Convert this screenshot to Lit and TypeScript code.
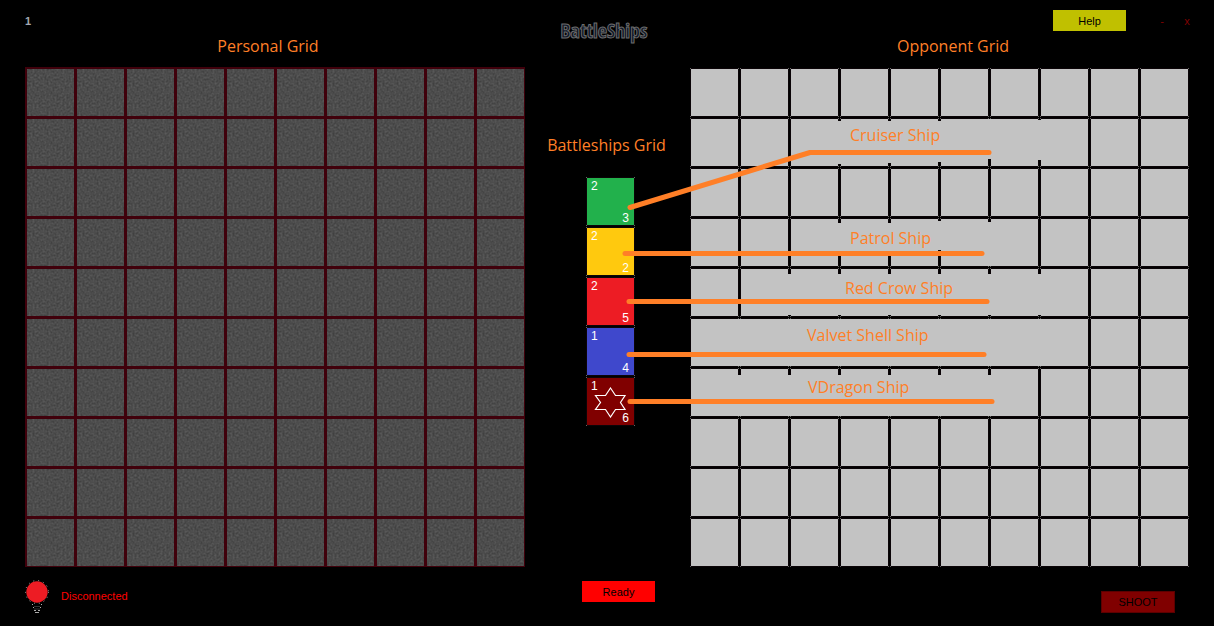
import { LitElement, html, svg, css } from "lit";
import { customElement } from "lit/decorators.js";
import { classMap } from "lit/directives/class-map.js";

const CELLS = Array.from({ length: 100 }, (_, i) => i);

interface Ship {
  name: string;
  kind: string;
  count: number;
  size: number;
  line: string;
  x: number;
  y: number;
}

// Callout coordinates are measured from the opponent board's top left corner.
const SHIPS: Ship[] = [
  { name: "Cruiser Ship", kind: "cruiser", count: 2, size: 3, line: "-60,139.5 120,84.5 299,84.5", x: 160, y: 73 },
  { name: "Patrol Ship", kind: "patrol", count: 2, size: 2, line: "-65,185.5 292,185.5", x: 160, y: 176 },
  { name: "Red Crow Ship", kind: "crow", count: 2, size: 5, line: "-61,233.5 297,233.5", x: 155, y: 226 },
  { name: "Valvet Shell Ship", kind: "shell", count: 1, size: 4, line: "-61,286.5 294,286.5", x: 117, y: 273 },
  { name: "VDragon Ship", kind: "dragon", count: 1, size: 6, line: "-60,333.5 302,333.5", x: 118, y: 325 },
];

// Cleared stretches of the vertical rules: [x, top, bottom].
const CLEARED: number[][] = [
  [148, 53, 96], [198, 53, 95], [248, 53, 94], [298, 51, 91], [348, 52, 92],
  [148, 155, 184], [198, 155, 184], [248, 153, 182], [298, 154, 198],
  ...[98, 148, 198, 248, 298, 348].map((x) => [x, 206, 247]),
  ...[48, 98, 148, 198, 248, 298, 348].map((x) => [x, 251, 298]),
  ...[48, 98, 148, 198, 248, 298].map((x) => [x, 307, 348]),
];

@customElement("ship-callouts")
export class ShipCallouts extends LitElement {
  static styles = css`
    :host { display: block; pointer-events: none; }
    .canvas { display: block; width: 100%; height: 100%; overflow: visible; }
    .cleared { fill: #c3c3c3; }
    .lead { fill: none; stroke: #ff7f27; stroke-width: 5; stroke-linecap: round; stroke-linejoin: round; }
    .label { fill: #ff7f27; font: 16px "Open Sans", "Noto Sans", sans-serif; }
  `;

  render() {
    return html`<svg class="canvas">
      ${CLEARED.map(([x, top, bottom]) => svg`<rect class="cleared" x=${x} y=${top} width="4" height=${bottom - top}></rect>`)}
      ${SHIPS.map((s) => svg`<polyline class="lead" points=${s.line}></polyline>
        <text class="label" x=${s.x} y=${s.y}>${s.name}</text>`)}
    </svg>`;
  }
}

@customElement("app-root")
export class AppRoot extends LitElement {
  static styles = css`
    :host {
      display: block;
      min-height: 100vh;
      background: #000;
      font: 11px/14px "Liberation Sans", Arial, sans-serif;
    }
    * { box-sizing: border-box; }
    .page {
      display: grid;
      grid-template-columns: minmax(500px, 1fr) 165px minmax(500px, 1fr);
      padding: 0 24px 0 25px;
    }
    .side, .middle { display: flex; flex-direction: column; }
    .side { width: 500px; }
    .side.personal { justify-self: end; }
    .middle { align-items: center; }
    .bar { display: flex; height: 34px; padding-top: 10px; }
    .turn { padding-top: 4px; font-weight: bold; color: #a4a8b0; }
    .tools { justify-content: flex-end; align-items: flex-start; }
    button {
      margin: 0;
      padding: 0;
      border: 0;
      font: inherit;
      color: #000;
      cursor: pointer;
    }
    .help, .ready { width: 73px; height: 21px; }
    .help { background: #c0c000; margin-right: 24px; }
    .ready { background: #f00; }
    .shoot { width: 74px; height: 22px; background: #800000; border: 1px solid #5c0000; }
    .window { width: 24px; height: 21px; background: none; color: #800000; }
    .window.close { width: 16px; margin-right: -5px; margin-left: 5px; }
    .caption {
      margin: 0;
      font: 16px/24px "Open Sans", "Noto Sans", sans-serif;
      color: #ff7f27;
      text-align: center;
    }
    .side .caption { height: 33px; }
    .personal .caption { padding-right: 14px; }
    .opponent .caption { padding-left: 26px; }
    .title {
      margin: 0;
      padding: 14px 7px 0 0;
      font: 20px/34px "Open Sans Condensed", "Open Sans", sans-serif;
      font-stretch: condensed;
      color: #101828;
      -webkit-text-stroke: 1px #6c6c6c;
    }
    .middle .caption { margin-top: 85px; padding-right: 2px; }
    .board {
      position: relative;
      display: grid;
      grid-template-columns: repeat(10, max-content);
      width: max-content;
    }
    .personal .board { gap: 3px; padding: 2px 1px 1px 2px; background: #40000b; }
    .opponent .board { gap: 1px; margin-top: 1px; }
    .stone {
      width: 47px;
      height: 47px;
      background: #4c4c4c url("data:image/svg+xml,%3Csvg xmlns='http://www.w3.org/2000/svg' width='47' height='47'%3E%3Cfilter id='n' x='0' y='0' width='1' height='1' color-interpolation-filters='sRGB'%3E%3CfeTurbulence type='fractalNoise' baseFrequency='.5' numOctaves='2' seed='4'/%3E%3CfeColorMatrix values='.18 0 0 0 .21 .18 0 0 0 .21 .18 0 0 0 .21 0 0 0 0 1'/%3E%3C/filter%3E%3Crect width='47' height='47' filter='url(%23n)'/%3E%3C/svg%3E");
    }
    .tile {
      --face: #c3c3c3;
      --edge: #0b0407;
      width: 49px;
      height: 49px;
      background:
        linear-gradient(var(--face), var(--face)) center / 47px 47px no-repeat,
        linear-gradient(var(--edge), var(--edge)) center / 47px 49px no-repeat,
        linear-gradient(var(--edge), var(--edge)) center / 49px 47px no-repeat,
        #666;
    }
    .callouts { position: absolute; inset: 0; }
    .fleet { display: grid; gap: 1px; margin: 20px 0 0 6px; padding: 0; list-style: none; }
    .ship {
      display: grid;
      grid-template-columns: 1fr auto 1fr;
      padding: 2px 6px 1px 5px;
      font-size: 12px;
      color: #fff;
    }
    .size { grid-column: 3; align-self: end; justify-self: end; }
    .star { width: 33px; height: 31px; margin: 8px -10px 0; }
    .cruiser { --face: #22b14c; }
    .patrol { --face: #ffc90e; }
    .crow { --face: #ed1c24; }
    .shell { --face: #3f48cc; }
    .dragon { --face: #800000; }
    .ready { margin: 155px 0 0 22px; }
    .status { display: flex; align-items: flex-start; gap: 12px; padding-top: 12px; color: #f00; }
    .state { padding-top: 10px; }
    .bulb { width: 24px; height: 35px; }
    .fire { display: flex; justify-content: flex-end; padding: 24px 15px 0 0; }
  `;

  private star() {
    return html`<svg class="star" viewBox="0 0 33 31" fill="none" stroke="#fff" stroke-width="1.2">
      <path d="M16.5 1 L21.5 8.5 H31 L26.5 15.5 L31 22.5 H21.5 L16.5 30 L11.5 22.5 H1.5 L6.5 15.5 L1.5 8.5 H11.5 Z"></path>
    </svg>`;
  }

  render() {
    return html`<main class="page">
      <section class="side personal">
        <div class="bar"><span class="turn">1</span></div>
        <h2 class="caption">Personal Grid</h2>
        <div class="board">${CELLS.map(() => html`<div class="stone"></div>`)}</div>
        <div class="status">
          <svg class="bulb" viewBox="0 0 24 35" fill="none">
            <circle cx="12" cy="13" r="11.5" stroke="#aaa" stroke-dasharray="1 4"></circle>
            <circle cx="12" cy="13" r="10.7" fill="#ed1c24"></circle>
            <path d="M7 25.5h1M16 25.5h1M8 28.5h1M15 28.5h1M9 31.5h2M13 31.5h2M10 33.5h4" stroke="#aaa"></path>
            <path d="M9 27.5h6M9 30h6" stroke="#333"></path>
          </svg>
          <span class="state">Disconnected</span>
        </div>
      </section>
      <section class="middle">
        <h1 class="title">BattleShips</h1>
        <h2 class="caption">Battleships Grid</h2>
        <ul class="fleet">
          ${SHIPS.map((s) => html`<li class=${classMap({ tile: true, ship: true, [s.kind]: true })}>
            <span>${s.count}</span>${s.kind === "dragon" ? this.star() : ""}<span class="size">${s.size}</span>
          </li>`)}
        </ul>
        <button class="ready">Ready</button>
      </section>
      <section class="side opponent">
        <div class="bar tools">
          <button class="help">Help</button>
          <button class="window">-</button>
          <button class="window close">x</button>
        </div>
        <h2 class="caption">Opponent Grid</h2>
        <div class="board">
          ${CELLS.map(() => html`<div class="tile"></div>`)}
          <ship-callouts class="callouts"></ship-callouts>
        </div>
        <div class="fire"><button class="shoot">SHOOT</button></div>
      </section>
    </main>`;
  }
}
